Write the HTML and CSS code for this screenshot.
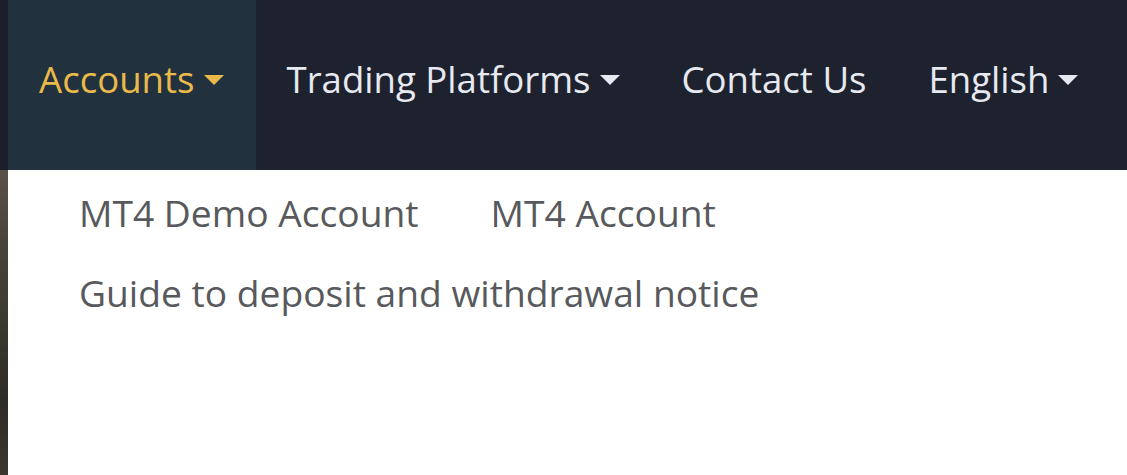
FILE: index.html
```html
<!DOCTYPE html>
<html lang="en">
<head>
<meta charset="utf-8">
<title>Menu</title>
<link rel="stylesheet" href="styles.css">
</head>
<body>
<div class="page">
  <nav class="navbar">
    <a class="nav-item active" href="#">Accounts<span class="caret"></span></a>
    <a class="nav-item" href="#">Trading Platforms<span class="caret"></span></a>
    <a class="nav-item" href="#">Contact Us</a>
    <a class="nav-item" href="#">English<span class="caret"></span></a>
  </nav>
  <div class="dropdown">
    <a class="drop-item" href="#">MT4 Demo Account</a>
    <a class="drop-item" href="#">MT4 Account</a>
    <a class="drop-item" href="#">Guide to deposit and withdrawal notice</a>
  </div>
</div>
</body>
</html>
```
FILE: styles.css
```css
html, body {
  margin: 0;
  height: 100%;
}
body {
  padding-left: 8px;
  box-sizing: border-box;
  font-family: "Open Sans", "Noto Sans", sans-serif;
  background:
    linear-gradient(#1c1f2b 0, #1c1f2b 170px, #5a5148 170px, #4a443c 240px, #3a3a30 320px, #2e2c26 400px, #3a3730 475px);
  overflow: hidden;
}
.page {
  background: #ffffff;
  height: 100%;
}
.navbar {
  display: flex;
  height: 170px;
  background: #1e212e;
}
.nav-item {
  display: flex;
  align-items: center;
  padding: 0 31px 12px;
  font-size: 36.6px;
  color: #e7e9f1;
  text-decoration: none;
  white-space: nowrap;
}
.nav-item.active {
  background: #21313d;
  color: #e9b94a;
  padding-right: 32px;
}
.caret {
  display: inline-block;
  width: 0;
  height: 0;
  margin-left: 9px;
  margin-top: 2px;
  border-top: 10px solid currentColor;
  border-left: 10px solid transparent;
  border-right: 10px solid transparent;
}
.dropdown {
  display: flex;
  flex-wrap: wrap;
  column-gap: 72px;
  row-gap: 32px;
  padding: 19px 71px 0;
  width: 760px;
}
.drop-item {
  font-size: 37.2px;
  line-height: 48px;
  color: #58595c;
  text-decoration: none;
  white-space: nowrap;
}
```
